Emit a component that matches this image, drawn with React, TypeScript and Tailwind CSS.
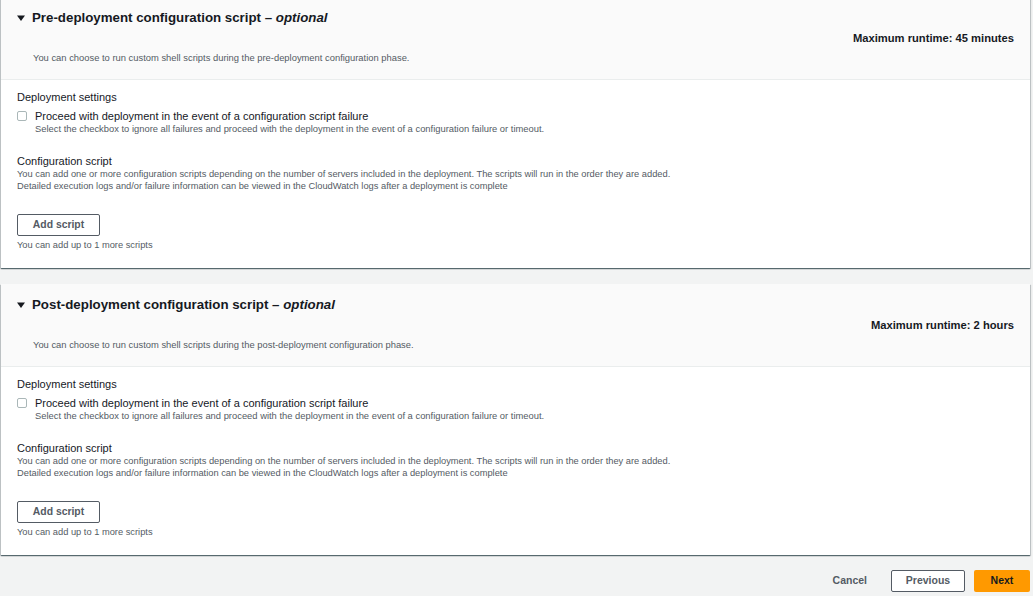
import React from "react";

function Caret() {
  return (
    <svg width="8" height="8" viewBox="0 0 8 8" className="shrink-0">
      <path d="M0 1.5h8L4 7z" fill="#16191f" />
    </svg>
  );
}

function ScriptSection({ phase, title, runtime }: { phase: string; title: string; runtime: string }) {
  return (
    <section className="ml-[1px] mr-[3px] bg-white shadow-[0_1px_1px_0_rgba(0,28,36,0.5),1px_1px_1px_0_rgba(0,28,36,0.15),-1px_1px_1px_0_rgba(0,28,36,0.15)]">
      <div className="border-b border-[#eaeded] bg-[#fafafa] px-4 pb-[15px] pt-[11px]">
        <div className="flex h-5 items-center gap-[7px]">
          <Caret />
          <h2 className="text-[13.3px] font-bold text-[#16191f]">
            {title} – <i>optional</i>
          </h2>
        </div>
        <div className="mt-[3px] text-right text-[11.2px] font-bold leading-[14px] text-[#16191f]">Maximum runtime: {runtime}</div>
        <p className="mt-[7px] pl-4 text-[9.4px] leading-[12px] text-[#545b64]">
          You can choose to run custom shell scripts during the {phase} configuration phase.
        </p>
      </div>
      <div className="px-4 pb-[17px] pt-[10px]">
        <div className="text-[11px] leading-[14px] text-[#16191f]">Deployment settings</div>
        <label className="mt-[5px] flex gap-2">
          <span className="mt-[2px] h-[10px] w-[10px] shrink-0 rounded-[2px] border border-[#aab7b8] bg-white" />
          <span>
            <span className="block text-[11px] leading-[14px] text-[#16191f]">Proceed with deployment in the event of a configuration script failure</span>
            <span className="block text-[9.4px] leading-[12px] text-[#545b64]">
              Select the checkbox to ignore all failures and proceed with the deployment in the event of a configuration failure or timeout.
            </span>
          </span>
        </label>
        <div className="mt-[19px] text-[11px] leading-[14px] text-[#16191f]">Configuration script</div>
        <p className="text-[9.3px] leading-[12px] text-[#545b64]">
          You can add one or more configuration scripts depending on the number of servers included in the deployment. The scripts will run in the order they are added.
          <br />
          Detailed execution logs and/or failure information can be viewed in the CloudWatch logs after a deployment is complete
        </p>
        <button className="mt-[22px] flex h-[22px] w-[83px] items-center justify-center rounded-[2px] border border-[#545b64] bg-white text-[10.4px] font-bold text-[#545b64]">
          Add script
        </button>
        <p className="mt-[3px] text-[9.3px] leading-[12px] text-[#545b64]">You can add up to 1 more scripts</p>
      </div>
    </section>
  );
}

export default function App() {
  return (
    <div className="min-h-[599px] bg-[#f2f3f3] font-['Liberation_Sans',Arial,sans-serif]">
      <div className="-mt-[3px] flex flex-col gap-4">
        <ScriptSection phase="pre-deployment" title="Pre-deployment configuration script" runtime="45 minutes" />
        <ScriptSection phase="post-deployment" title="Post-deployment configuration script" runtime="2 hours" />
      </div>
      <div className="mr-[3px] mt-[15px] flex items-center justify-end">
        <button className="mr-[24px] text-[10.5px] font-bold text-[#545b64]">Cancel</button>
        <button className="flex h-[22px] w-[74px] items-center justify-center rounded-[2px] border border-[#545b64] bg-white text-[10.5px] font-bold text-[#545b64]">
          Previous
        </button>
        <button className="ml-[9px] flex h-[22px] w-[56px] items-center justify-center rounded-[2px] bg-[#ff9900] text-[10.5px] font-bold text-[#16191f]">
          Next
        </button>
      </div>
    </div>
  );
}
